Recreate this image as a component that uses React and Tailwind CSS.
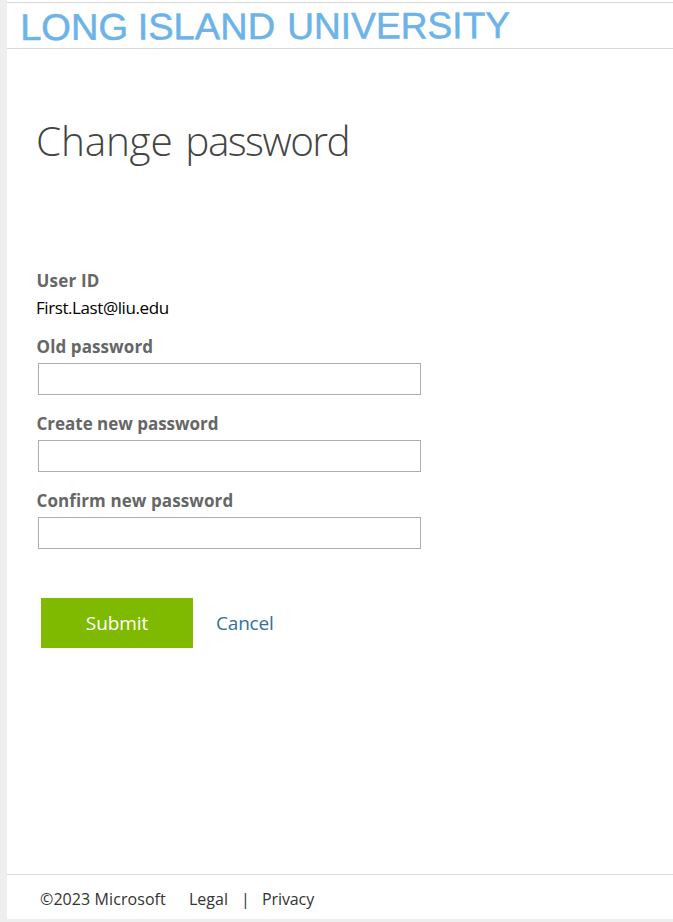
const LOGO_WORDS = [
  { word: "LONG", x: -2, width: 108 },
  { word: "ISLAND", x: 115.5, width: 137.5 },
  { word: "UNIVERSITY", x: 265, width: 223 },
];

const FIELDS = [
  { id: "old", label: "Old password", spacing: "tracking-[0.1px]" },
  { id: "create", label: "Create new password", spacing: "tracking-[-0.02px]" },
  { id: "confirm", label: "Confirm new password", spacing: "tracking-[0.1px]" },
];

const Header = () => {
  return (
    <header className="h-[47px] border-y border-[#d9d9d9]">
      <svg
        viewBox="0 0 500 45"
        className="ml-[15px] h-[45px] w-[500px] overflow-visible"
        role="img"
        aria-label="Long Island University"
      >
        <g
          transform="rotate(-0.24)"
          className="fill-[#6bb3e8] font-['Liberation_Sans'] text-[37px]"
          stroke="#6bb3e8"
          strokeWidth="0.5"
        >
          {LOGO_WORDS.map(({ word, x, width }) => (
            <text key={word} x={x} y="37" textLength={width} lengthAdjust="spacingAndGlyphs">
              {word}
            </text>
          ))}
        </g>
      </svg>
    </header>
  );
};

const Field = ({ id, label, spacing }) => {
  return (
    <div className="h-[77px]">
      <label
        htmlFor={id}
        className={`-ml-[0.5px] block h-[28px] text-[17px] leading-[24px] font-bold text-[#666] ${spacing}`}
      >
        {label}
      </label>
      <input
        id={id}
        type="password"
        className="ml-px block h-[32px] w-[383px] border border-[#a6afb8] bg-white px-2 outline-none"
      />
    </div>
  );
};

const Footer = () => {
  return (
    <footer className="flex h-[45px] items-center border-t border-[#dcdcdc] pt-1 pl-[33px] text-[16px] text-[#333]">
      <span className="w-[149px] tracking-[0.08px]">©2023 Microsoft</span>
      <a href="#legal" className="w-[52px]">Legal</a>
      <span className="w-[21px]">|</span>
      <a href="#privacy" className="tracking-[-0.1px]">Privacy</a>
    </footer>
  );
};

const App = () => {
  return (
    <div className="flex h-[922px] w-[673px] flex-col overflow-hidden bg-[#eeeeee] pb-[3px] pl-[7px] font-['Open_Sans','Noto_Sans',sans-serif] whitespace-nowrap">
      <div className="flex flex-1 flex-col bg-white pt-[2px]">
        <Header />
        <main className="flex-1 pl-[30px]">
          <h1 className="-ml-px mt-[64px] h-[60px] text-[40.5px] leading-[56px] font-light tracking-[-1.55px] text-[#444]">
            <span className="tracking-[-0.2px]">Change</span>
            <span className="tracking-[2.3px]"> </span>
            password
          </h1>
          <form className="mt-[96px]" onSubmit={(e) => e.preventDefault()}>
            <p className="-ml-[0.5px] h-[27px] text-[17px] leading-[24px] font-bold tracking-[0.2px] text-[#666]">
              User ID
            </p>
            <p className="-ml-px h-[39px] text-[17px] leading-[24px] tracking-[-0.42px] text-black">
              First.Last@liu.edu
            </p>
            {FIELDS.map((field) => (
              <Field key={field.id} {...field} />
            ))}
            <div className="mt-[32px] flex items-center pl-[4px] text-[19px]">
              <button type="submit" className="h-[50px] w-[152px] bg-[#7fba00] tracking-[-0.1px] text-white">
                Submit
              </button>
              <a href="#cancel" className="ml-[23px] tracking-[-0.2px] text-[#33709c]">Cancel</a>
            </div>
          </form>
        </main>
        <Footer />
      </div>
    </div>
  );
};

export default App;
